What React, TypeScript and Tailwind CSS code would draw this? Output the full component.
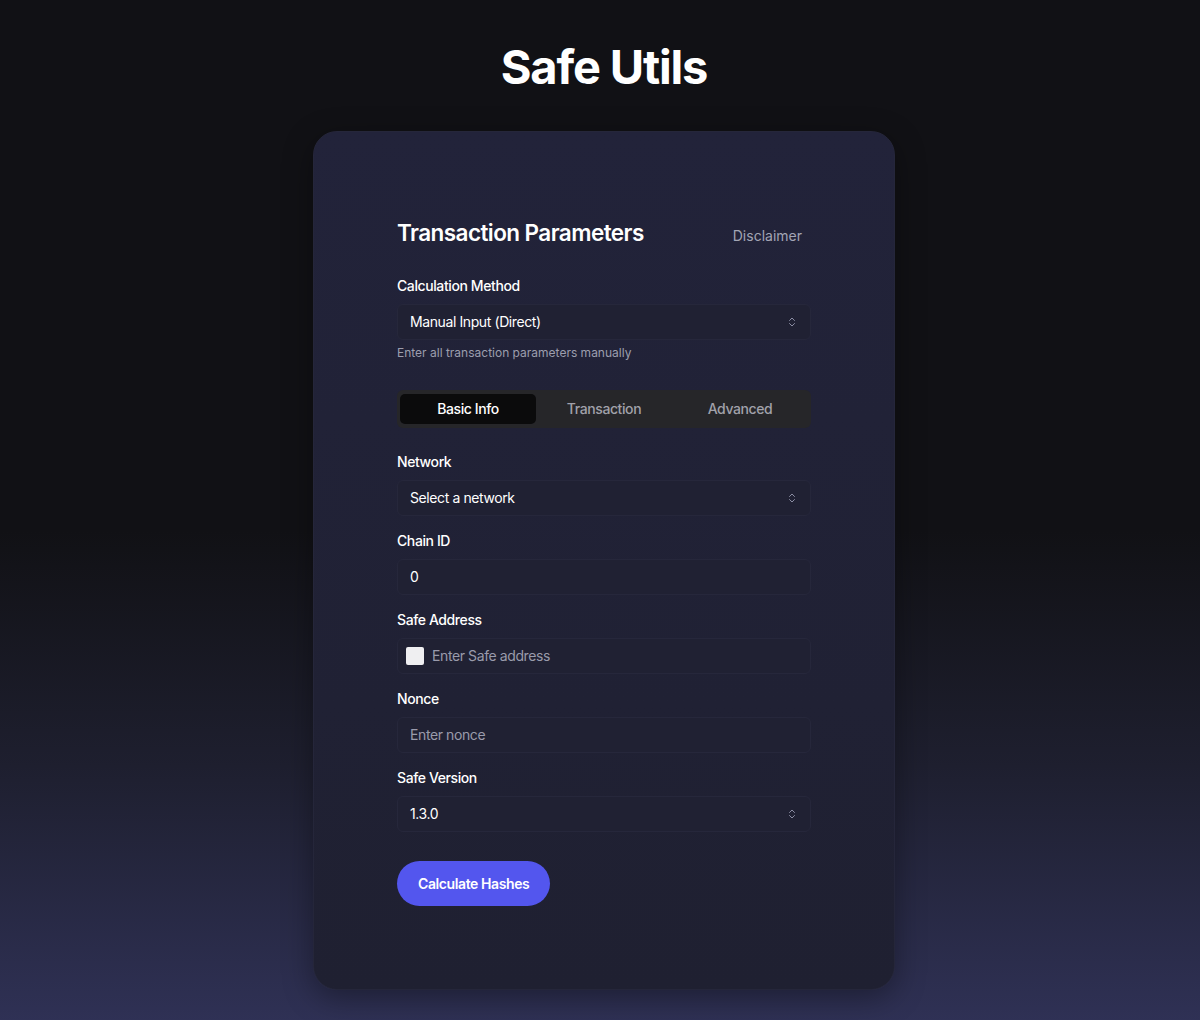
import { ChevronsUpDown } from 'lucide-react';

const Label = ({ children }: { children: React.ReactNode }) => (
  <label className="block text-sm font-medium leading-5 text-white">{children}</label>
);

const SelectBox = ({ value }: { value: string }) => (
  <div className="mt-2 flex h-9 items-center justify-between rounded-md border border-[#26273b] bg-[#202133] pl-3 pr-3 text-sm text-white">
    <span>{value}</span>
    <ChevronsUpDown className="h-3 w-3 text-[#8b8da3]" strokeWidth={2} />
  </div>
);

const InputBox = ({ value, placeholder, icon }: { value?: string; placeholder?: string; icon?: boolean }) => (
  <div className="mt-2 flex h-9 items-center gap-2 rounded-md border border-[#26273b] bg-[#202133] px-3 text-sm">
    {icon && <div className="-ml-1 h-[18px] w-[18px] rounded-[2px] bg-[#efeff1]" />}
    {value ? <span className="text-white">{value}</span> : <span className="text-[#9a9bab]">{placeholder}</span>}
  </div>
);

export default function App() {
  const tabs = ['Basic Info', 'Transaction', 'Advanced'];
  return (
    <div
      className="min-h-screen bg-[linear-gradient(to_bottom,#111115_0%,#111115_52%,#1e1f2f_75%,#2f3155_100%)] pb-8 pl-[8px] pt-[38px] tracking-tight text-white"
      style={{ fontFamily: 'Inter, "Noto Sans", sans-serif' }}
    >
      <h1 className="text-center text-[47px] font-bold leading-[58px] tracking-[-0.025em]">Safe Utils</h1>

      <div className="mx-auto mt-[35px] w-[582px] rounded-[24px] border border-[#25263a] bg-[linear-gradient(to_bottom,#22233a,#1f2031)] px-[83px] pb-[83px] pt-[85px] shadow-[0_8px_30px_rgba(0,0,0,0.35)]">
        <div className="flex items-center justify-between">
          <h2 className="text-[22.5px] font-semibold leading-8 tracking-tight">Transaction Parameters</h2>
          <button className="mt-[6px] pr-[9px] text-sm tracking-normal text-[#a3a5b5]">Disclaimer</button>
        </div>

        <div className="mt-[27px]">
          <Label>Calculation Method</Label>
          <SelectBox value="Manual Input (Direct)" />
          <p className="mt-[5px] text-xs tracking-normal text-[#9c9eae]">Enter all transaction parameters manually</p>
        </div>

        <div className="mt-[29px] grid h-[38px] grid-cols-3 items-center rounded-md bg-[#262629] p-[3px]">
          {tabs.map((t, i) => (
            <div
              key={t}
              className={`flex h-[30px] items-center justify-center rounded-[5px] text-sm font-medium ${
                i === 0 ? 'bg-[#0b0b0c] text-white' : 'text-[#a1a1aa]'
              }`}
            >
              {t}
            </div>
          ))}
        </div>

        <div className="mt-[24px] space-y-[15px]">
          <div>
            <Label>Network</Label>
            <SelectBox value="Select a network" />
          </div>
          <div>
            <Label>Chain ID</Label>
            <InputBox value="0" />
          </div>
          <div>
            <Label>Safe Address</Label>
            <InputBox placeholder="Enter Safe address" icon />
          </div>
          <div>
            <Label>Nonce</Label>
            <InputBox placeholder="Enter nonce" />
          </div>
          <div>
            <Label>Safe Version</Label>
            <SelectBox value="1.3.0" />
          </div>
        </div>

        <button className="mt-[29px] h-[45px] rounded-full bg-[#5356ee] px-[21px] text-sm font-semibold text-white">
          Calculate Hashes
        </button>
      </div>
    </div>
  );
}
